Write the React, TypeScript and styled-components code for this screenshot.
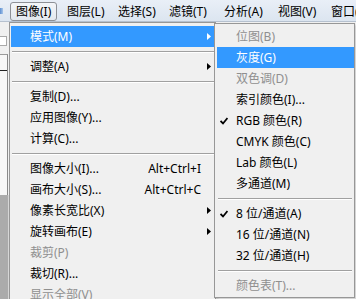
import React from 'react'
import styled, { createGlobalStyle } from 'styled-components'

type Entry =
  | 'sep'
  | {
      label: string
      shortcut?: string
      sub?: boolean
      active?: boolean
      disabled?: boolean
      checked?: boolean
    }

const GlobalStyle = createGlobalStyle`
  html, body {
    margin: 0;
    padding: 0;
    background: #f0f0f0;
  }
  body {
    font-family: 'Noto Sans', 'Noto Sans CJK SC', sans-serif;
    font-size: 12px;
    color: #000;
  }
`

const Screen = styled.div`
  position: relative;
  width: 356px;
  height: 299px;
  overflow: hidden;
  background: #f0f0f0;
`

const MenuBar = styled.div`
  display: flex;
  align-items: flex-end;
  height: 22px;
  box-sizing: border-box;
  border-bottom: 1px solid #b6c1cf;
  background: linear-gradient(#e9eff7, #dce5f0);
  white-space: nowrap;
  overflow: hidden;
`

const AppIcon = styled.div`
  align-self: center;
  flex: none;
  width: 3px;
  height: 6px;
  margin-right: 7px;
  background: linear-gradient(90deg, #5d8fd1, #a8c6ea);
`

const MenuTitle = styled.div<{ $width: number; $pressed?: boolean }>`
  flex: none;
  box-sizing: border-box;
  height: 19px;
  line-height: 17px;
  width: ${(p) => (p.$pressed ? p.$width - 3 : p.$width)}px;
  margin-right: ${(p) => (p.$pressed ? 3 : 0)}px;
  padding-left: ${(p) => (p.$pressed ? 5 : 6)}px;
  border: 1px solid ${(p) => (p.$pressed ? '#8d9096' : 'transparent')};
  border-radius: 3px;
  background: ${(p) => (p.$pressed ? 'linear-gradient(#f4f6f9, #e3e8ee)' : 'transparent')};
`

const Workspace = styled.div`
  display: flex;
  height: 277px;
`

const LeftDock = styled.div`
  display: flex;
  flex-direction: column;
  width: 9px;
`

const OptionsStrip = styled.div`
  height: 32px;
  padding-top: 14px;
  box-sizing: border-box;
`

const OptionsField = styled.div`
  width: 6px;
  height: 8px;
  background: #fff;
  border: 1px solid #a9a9a9;
  border-left: none;
`

const Ruler = styled.div`
  height: 141px;
  width: 8px;
  box-sizing: border-box;
  background: #f7f7f7;
  border-top: 1px solid #9a9a9a;
  border-right: 1px solid #8a8a8a;
  padding-top: 15px;
`

const RulerTick = styled.div`
  width: 7px;
  height: 1px;
  background: #222;
`

const Pasteboard = styled.div`
  flex: 1;
  width: 8px;
  background: #ababab;
  border-right: 1px solid #d6d6d6;
`

const Menu = styled.div<{ $left: number; $top: number; $width: number }>`
  position: absolute;
  left: ${(p) => p.$left}px;
  top: ${(p) => p.$top}px;
  width: ${(p) => p.$width}px;
  box-sizing: border-box;
  background: #f0f0f0;
  border: 1px solid #979797;
  box-shadow: 2px 2px 2px rgba(0, 0, 0, 0.12);
  white-space: nowrap;
`

const MainMenu = styled(Menu)`
  padding: 3px 0 3px 1px;
`

const SubMenu = styled(Menu)`
  padding: 2px 0 1px 2px;
`

const Row = styled.div<{ $active?: boolean; $disabled?: boolean }>`
  display: flex;
  align-items: center;
  height: 21px;
  line-height: 21px;
  padding-right: 4px;
  background: ${(p) => (p.$active ? '#3399ff' : 'transparent')};
  color: ${(p) => (p.$active ? '#fff' : p.$disabled ? '#8f8f8f' : '#000')};
`

const CheckCell = styled.div`
  flex: none;
  width: 19px;
  height: 21px;
  display: flex;
  align-items: center;
  padding-left: 3px;
  box-sizing: border-box;
`

const Label = styled.span`
  flex: 1;
`

const Shortcut = styled.span`
  margin-right: 10px;
`

const ArrowCell = styled.div`
  width: 4px;
  display: flex;
  align-items: center;
`

const Separator = styled.div<{ $inset: number }>`
  height: 9px;
  display: flex;
  align-items: center;
  margin: 0 ${(p) => p.$inset}px 0 1px;
  &::before {
    content: '';
    flex: 1;
    height: 1px;
    background: #a0a0a0;
    box-shadow: 0 1px 0 #ffffff;
  }
`

const titles = [
  { label: '图像(I)', width: 50, pressed: true },
  { label: '图层(L)', width: 51 },
  { label: '选择(S)', width: 51 },
  { label: '滤镜(T)', width: 55 },
  { label: '分析(A)', width: 54 },
  { label: '视图(V)', width: 53 },
  { label: '窗口(W)', width: 60 },
]

const imageMenu: Entry[] = [
  { label: '模式(M)', sub: true, active: true },
  'sep',
  { label: '调整(A)', sub: true },
  'sep',
  { label: '复制(D)...' },
  { label: '应用图像(Y)...' },
  { label: '计算(C)...' },
  'sep',
  { label: '图像大小(I)...', shortcut: 'Alt+Ctrl+I' },
  { label: '画布大小(S)...', shortcut: 'Alt+Ctrl+C' },
  { label: '像素长宽比(X)', sub: true },
  { label: '旋转画布(E)', sub: true },
  { label: '裁剪(P)', disabled: true },
  { label: '裁切(R)...' },
  { label: '显示全部(V)', disabled: true },
]

const modeMenu: Entry[] = [
  { label: '位图(B)', disabled: true },
  { label: '灰度(G)', active: true },
  { label: '双色调(D)', disabled: true },
  { label: '索引颜色(I)...' },
  { label: 'RGB 颜色(R)', checked: true },
  { label: 'CMYK 颜色(C)' },
  { label: 'Lab 颜色(L)' },
  { label: '多通道(M)' },
  'sep',
  { label: '8 位/通道(A)', checked: true },
  { label: '16 位/通道(N)' },
  { label: '32 位/通道(H)' },
  'sep',
  { label: '颜色表(T)...', disabled: true },
]

const Arrow = ({ color }: { color: string }) => (
  <svg width="4" height="7" viewBox="0 0 4 7">
    <path d="M0 0 L4 3.5 L0 7 Z" fill={color} />
  </svg>
)

const Check = ({ color }: { color: string }) => (
  <svg width="8" height="8" viewBox="0 0 8 8">
    <path d="M0.5 4 L3 6.5 L7.5 1" stroke={color} strokeWidth="1.8" fill="none" />
  </svg>
)

const MenuItems = ({ items, inset }: { items: Entry[]; inset: number }) => (
  <>
    {items.map((item, i) =>
      item === 'sep' ? (
        <Separator key={i} $inset={inset} />
      ) : (
        <Row key={i} $active={item.active} $disabled={item.disabled}>
          <CheckCell>{item.checked && <Check color={item.active ? '#fff' : '#000'} />}</CheckCell>
          <Label>{item.label}</Label>
          {item.shortcut && <Shortcut>{item.shortcut}</Shortcut>}
          {item.sub && (
            <ArrowCell>
              <Arrow color={item.active ? '#fff' : '#000'} />
            </ArrowCell>
          )}
        </Row>
      ),
    )}
  </>
)

export default function App() {
  return (
    <Screen>
      <GlobalStyle />
      <MenuBar>
        <AppIcon />
        {titles.map((t) => (
          <MenuTitle key={t.label} $width={t.width} $pressed={t.pressed}>
            {t.label}
          </MenuTitle>
        ))}
      </MenuBar>
      <Workspace>
        <LeftDock>
          <OptionsStrip>
            <OptionsField />
          </OptionsStrip>
          <Ruler>
            <RulerTick />
          </Ruler>
          <Pasteboard />
        </LeftDock>
      </Workspace>

      <MainMenu $left={9} $top={22} $width={207}>
        <MenuItems items={imageMenu} inset={0} />
      </MainMenu>
      <SubMenu $left={214} $top={23} $width={141}>
        <MenuItems items={modeMenu} inset={2} />
      </SubMenu>
    </Screen>
  )
}
